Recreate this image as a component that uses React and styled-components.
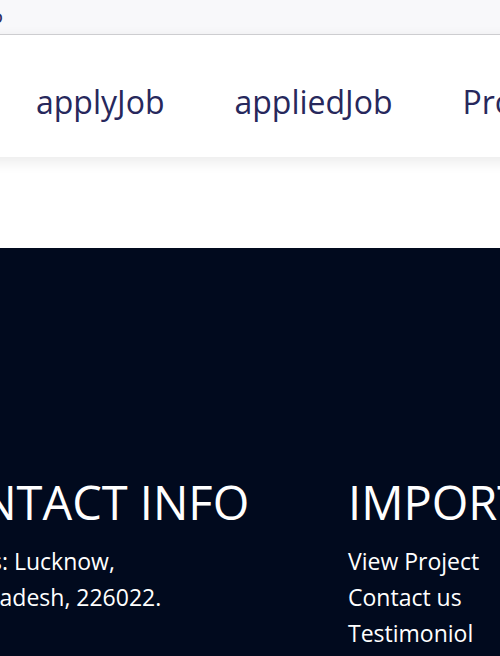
import styled, { createGlobalStyle } from 'styled-components'

const GlobalStyle = createGlobalStyle`
    html, body {
        margin: 0;
        padding: 0;
        background: #ffffff;
        font-family: "Open Sans", "Noto Sans", sans-serif;
    }
`

const Viewport = styled.div`
    width: 500px;
    height: 656px;
    overflow: hidden;
`

const Page = styled.div`
    width: 1200px;
    margin-left: -150px;
`

const TopBar = styled.div`
    height: 34px;
    background: #f8f8fa;
    border-bottom: 1px solid #d2d2d6;
    display: flex;
    align-items: center;
    padding-left: 113px;
`

const Brand = styled.a`
    font-size: 14px;
    font-weight: 600;
    color: #2b2b5e;
    text-decoration: none;
`

const Nav = styled.nav`
    height: 122px;
    background: #ffffff;
    box-shadow: 0 4px 14px rgba(0, 0, 0, 0.09);
    display: flex;
    align-items: center;
    padding-left: 186px;
    gap: 70px;
    position: relative;
`

const NavLink = styled.a`
    font-size: 32px;
    color: #27285c;
    text-decoration: none;
    padding-top: 10px;
    white-space: nowrap;
`

const Spacer = styled.div`
    height: 91px;
`

const Footer = styled.footer`
    background: #010a1e;
    color: #ffffff;
    height: 420px;
    padding-top: 224px;
    padding-left: 65px;
    display: grid;
    grid-template-columns: 350px 400px;
    column-gap: 83px;
    box-sizing: border-box;
`

const Column = styled.div`
    display: flex;
    flex-direction: column;
`

const Heading = styled.h2`
    margin: 0 0 11px;
    font-size: 47px;
    font-weight: 400;
    line-height: 60px;
    white-space: nowrap;
`

const Line = styled.p`
    margin: 0;
    font-size: 23px;
    line-height: 36px;
    white-space: nowrap;
`

export default function App() {
    return (
        <Viewport>
            <GlobalStyle />
            <Page>
                <TopBar>
                    <Brand>LOGO</Brand>
                </TopBar>
                <Nav>
                    <NavLink>applyJob</NavLink>
                    <NavLink>appliedJob</NavLink>
                    <NavLink>Profile</NavLink>
                </Nav>
                <Spacer />
                <Footer>
                    <Column>
                        <Heading>CONTACT INFO</Heading>
                        <Line>Address: Lucknow,</Line>
                        <Line>Uttar Pradesh, 226022.</Line>
                    </Column>
                    <Column>
                        <Heading>IMPORTANT LINKS</Heading>
                        <Line>View Project</Line>
                        <Line>Contact us</Line>
                        <Line>Testimoniol</Line>
                    </Column>
                </Footer>
            </Page>
        </Viewport>
    )
}
